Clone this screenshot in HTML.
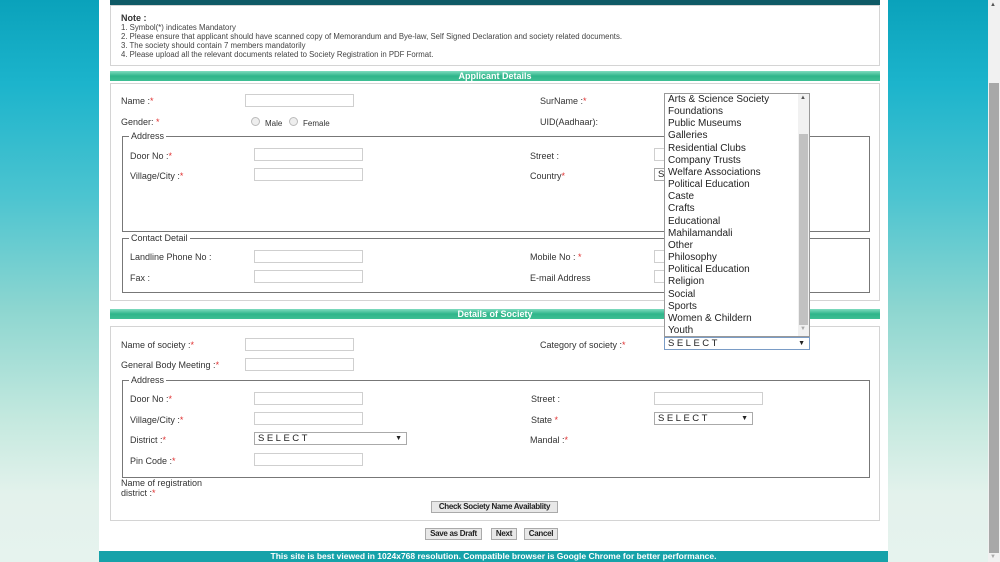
<!DOCTYPE html>
<html><head><style>
*{margin:0;padding:0;box-sizing:border-box}
body{width:1000px;height:562px;overflow:hidden;position:relative;font-family:"Liberation Sans",Arial,sans-serif;font-size:9px;color:#333;background:linear-gradient(#0aa2bb 0%,#1cb4cc 15%,#4cc4d0 35%,#8dd6d0 55%,#c5e9df 75%,#e3f2ec 88%,#e6f3ee 100%)}
.a{position:absolute;white-space:nowrap}
.page{left:99px;top:0;width:789px;height:562px;background:#fff}
.box{border:1px solid #d4d4d4;background:#fff}
.hdr{height:10px;background:linear-gradient(#7fdcbf,#2fb58a 50%,#3fbf94);color:#fff;font-weight:bold;font-size:9px;line-height:11px;text-align:center;overflow:hidden}
.in{border:1px solid #cfcfcf;height:13px;background:#fff;width:109px}
.fs{border:1px solid #777}
.lg{background:#fff;padding:0 2px;font-size:9px;color:#333;line-height:10px}
.r{color:#e03030}
.sel{border:1px solid #aaa;height:13px;background:#fff;font-size:9.5px;letter-spacing:2.5px;padding-left:3px;line-height:11px;color:#222}
.sel b{position:absolute;right:4px;top:0;font-size:7px;letter-spacing:0}
.btn{border:1px solid #aaa;background:#e8e8e8;height:12px;font-size:8px;font-weight:bold;line-height:10px;text-align:center;color:#222;letter-spacing:-0.3px}
.rad{width:9px;height:9px;border-radius:50%;border:1px solid #bbb;background:#eee}
</style></head><body>
<div class="a page"></div>
<div class="a" style="left:110px;top:0;width:770px;height:5px;background:#0f5a66"></div>
<div class="a box" style="left:110px;top:5px;width:770px;height:61px"></div>
<div class="a" style="left:121px;top:13px;font-size:9px;font-weight:bold;color:#333">Note :</div>
<div class="a" style="left:121px;top:23px;font-size:7.8px;line-height:9px;color:#444">1. Symbol(*) indicates Mandatory<br>2. Please ensure that applicant should have scanned copy of Memorandum and Bye-law, Self Signed Declaration and society related documents.<br>3. The society should contain 7 members mandatorily<br>4. Please upload all the relevant documents related to Society Registration in PDF Format.</div>

<div class="a hdr" style="left:110px;top:71px;width:770px">Applicant Details</div>
<div class="a box" style="left:110px;top:83px;width:770px;height:218px"></div>
<div class="a" style="left:121px;top:96px">Name :<span class="r">*</span></div>
<div class="a in" style="left:245px;top:94px"></div>
<div class="a" style="left:540px;top:96px">SurName :<span class="r">*</span></div>
<div class="a" style="left:121px;top:117px">Gender: <span class="r">*</span></div>
<div class="a rad" style="left:251px;top:117px"></div><div class="a" style="left:265px;top:119px;font-size:8px">Male</div>
<div class="a rad" style="left:289px;top:117px"></div><div class="a" style="left:303px;top:119px;font-size:8px">Female</div>
<div class="a" style="left:540px;top:117px">UID(Aadhaar):</div>
<div class="a fs" style="left:122px;top:136px;width:748px;height:96px"></div>
<div class="a lg" style="left:129px;top:131px">Address</div>
<div class="a" style="left:130px;top:151px">Door No :<span class="r">*</span></div>
<div class="a in" style="left:254px;top:148px"></div>
<div class="a" style="left:530px;top:151px">Street :</div>
<div class="a in" style="left:654px;top:148px"></div>
<div class="a" style="left:130px;top:171px">Village/City :<span class="r">*</span></div>
<div class="a in" style="left:254px;top:168px"></div>
<div class="a" style="left:530px;top:171px">Country<span class="r">*</span></div>
<div class="a sel" style="left:654px;top:168px;width:100px">S</div>
<div class="a fs" style="left:122px;top:238px;width:748px;height:55px"></div>
<div class="a lg" style="left:129px;top:233px">Contact Detail</div>
<div class="a" style="left:130px;top:252px">Landline Phone No :</div>
<div class="a in" style="left:254px;top:250px"></div>
<div class="a" style="left:530px;top:252px">Mobile No : <span class="r">*</span></div>
<div class="a in" style="left:654px;top:250px"></div>
<div class="a" style="left:130px;top:273px">Fax :</div>
<div class="a in" style="left:254px;top:270px"></div>
<div class="a" style="left:530px;top:273px">E-mail Address</div>
<div class="a in" style="left:654px;top:270px"></div>

<div class="a hdr" style="left:110px;top:309px;width:770px">Details of Society</div>
<div class="a box" style="left:110px;top:326px;width:770px;height:195px"></div>
<div class="a" style="left:121px;top:340px">Name of society :<span class="r">*</span></div>
<div class="a in" style="left:245px;top:338px"></div>
<div class="a" style="left:121px;top:360px">General Body Meeting :<span class="r">*</span></div>
<div class="a in" style="left:245px;top:358px"></div>
<div class="a" style="left:540px;top:340px">Category of society :<span class="r">*</span></div>
<div class="a fs" style="left:122px;top:380px;width:748px;height:98px"></div>
<div class="a lg" style="left:129px;top:375px">Address</div>
<div class="a" style="left:130px;top:394px">Door No :<span class="r">*</span></div>
<div class="a in" style="left:254px;top:392px"></div>
<div class="a" style="left:531px;top:394px">Street :</div>
<div class="a in" style="left:654px;top:392px"></div>
<div class="a" style="left:130px;top:415px">Village/City :<span class="r">*</span></div>
<div class="a in" style="left:254px;top:412px"></div>
<div class="a" style="left:531px;top:415px">State <span class="r">*</span></div>
<div class="a sel" style="left:654px;top:412px;width:99px">SELECT<b>▼</b></div>
<div class="a" style="left:130px;top:435px">District :<span class="r">*</span></div>
<div class="a sel" style="left:254px;top:432px;width:153px">SELECT<b>▼</b></div>
<div class="a" style="left:530px;top:435px">Mandal :<span class="r">*</span></div>
<div class="a" style="left:130px;top:456px">Pin Code :<span class="r">*</span></div>
<div class="a in" style="left:254px;top:453px"></div>
<div class="a" style="left:121px;top:478px;line-height:10px">Name of registration<br>district :<span class="r">*</span></div>
<div class="a btn" style="left:431px;top:501px;width:127px">Check Society Name Availablity</div>
<div class="a btn" style="left:425px;top:528px;width:57px">Save as Draft</div>
<div class="a btn" style="left:491px;top:528px;width:26px">Next</div>
<div class="a btn" style="left:524px;top:528px;width:34px">Cancel</div>
<div class="a" style="left:99px;top:551px;width:789px;height:11px;background:#16a2a9;color:#fff;font-weight:bold;font-size:8.5px;text-align:center;line-height:11px">This site is best viewed in 1024x768 resolution. Compatible browser is Google Chrome for better performance.</div>

<!-- dropdown -->
<div class="a sel" style="left:664px;top:337px;width:146px;border-color:#7a9cc6">SELECT<b>▼</b></div>
<div class="a" style="left:664px;top:93px;width:146px;height:244px;background:#fff;border:1px solid #999"></div>
<div class="a" style="left:668px;top:94px;font-size:10px;line-height:12.15px;color:#222">Arts &amp; Science Society<br>Foundations<br>Public Museums<br>Galleries<br>Residential Clubs<br>Company Trusts<br>Welfare Associations<br>Political Education<br>Caste<br>Crafts<br>Educational<br>Mahilamandali<br>Other<br>Philosophy<br>Political Education<br>Religion<br>Social<br>Sports<br>Women &amp; Childern<br>Youth</div>
<div class="a" style="left:798px;top:94px;width:11px;height:242px;background:#f1f1f1"></div>
<div class="a" style="left:799px;top:134px;width:9px;height:191px;background:#c1c1c1"></div>
<div class="a" style="left:800px;top:95px;font-size:6px;color:#555">▲</div>
<div class="a" style="left:800px;top:326px;font-size:6px;color:#aaa">▼</div>

<!-- page scrollbar -->
<div class="a" style="left:988px;top:0;width:12px;height:562px;background:#f1f1f1"></div>
<div class="a" style="left:989px;top:83px;width:10px;height:470px;background:#a8a8a8"></div>
<div class="a" style="left:990px;top:2px;font-size:6px;color:#555">▲</div>
<div class="a" style="left:990px;top:554px;font-size:6px;color:#aaa">▼</div>
</body></html>
